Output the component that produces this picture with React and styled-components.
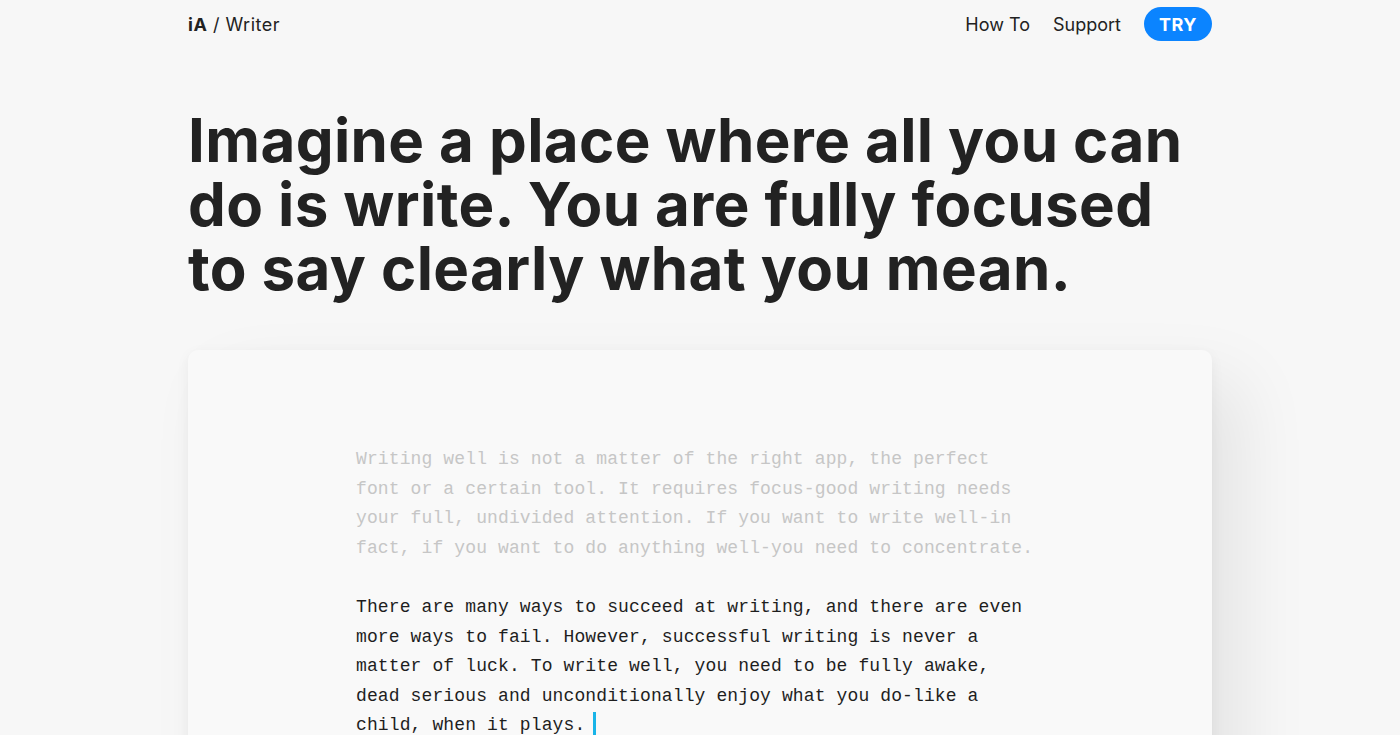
import React from "react";
import styled, { createGlobalStyle } from "styled-components";

const GlobalStyle = createGlobalStyle`
  html, body {
    margin: 0;
    padding: 0;
    background: #f7f7f7;
    overflow: hidden;
  }
  * { box-sizing: border-box; }
`;

const Page = styled.div`
  width: 1400px;
  height: 735px;
  overflow: hidden;
  background: #f7f7f7;
  font-family: "Inter", "Noto Sans", sans-serif;
  color: #222;
`;

const Wrap = styled.div`
  width: 1024px;
  margin: 0 auto;
`;

const Nav = styled.nav`
  height: 48px;
  display: flex;
  align-items: center;
  justify-content: space-between;
`;

const Logo = styled.a`
  font-size: 18px;
  color: #222;
  text-decoration: none;
  letter-spacing: 0.5px;
  b { font-weight: 700; }
`;

const Menu = styled.div`
  display: flex;
  align-items: center;
  gap: 23px;
`;

const MenuLink = styled.a`
  font-size: 18px;
  color: #222;
  text-decoration: none;
`;

const TryButton = styled.a`
  display: inline-flex;
  align-items: center;
  justify-content: center;
  width: 68px;
  height: 34px;
  border-radius: 17px;
  background: #0b84ff;
  color: #fff;
  font-weight: 700;
  font-size: 18px;
  letter-spacing: 0.5px;
  text-decoration: none;
`;

const Headline = styled.h1`
  margin: 60px 0 0;
  font-size: 60px;
  line-height: 64px;
  font-weight: 700;
  letter-spacing: 0.4px;
  color: #222;
`;

const Card = styled.div`
  margin-top: 50px;
  height: 500px;
  background: #f9f9f9;
  border-radius: 10px;
  box-shadow: 0 4px 14px rgba(0, 0, 0, 0.05), 30px 30px 70px rgba(0, 0, 0, 0.08);
  padding: 95px 0 0 168px;
`;

const Para = styled.p`
  margin: 0 0 30px;
  width: 700px;
  font-family: "Liberation Mono", "DejaVu Sans Mono", monospace;
  font-size: 18px;
  line-height: 29.5px;
  letter-spacing: 0.12px;
  color: ${({ $faded }) => ($faded ? "#c6c6c6" : "#1e1e1e")};
`;

const Cursor = styled.span`
  display: inline-block;
  width: 3px;
  height: 26px;
  margin-left: 8px;
  vertical-align: -8px;
  background: #19b4e8;
`;

export default function App() {
  return (
    <Page>
      <GlobalStyle />
      <Wrap>
        <Nav>
          <Logo href="#"><b>iA</b> / Writer</Logo>
          <Menu>
            <MenuLink href="#">How To</MenuLink>
            <MenuLink href="#">Support</MenuLink>
            <TryButton href="#">TRY</TryButton>
          </Menu>
        </Nav>
        <Headline>
          Imagine a place where all you can
          <br />
          do is write. You are fully focused
          <br />
          to say clearly what you mean.
        </Headline>
        <Card>
          <Para $faded>
            Writing well is not a matter of the right app, the perfect
            <br />
            font or a certain tool. It requires focus-good writing needs
            <br />
            your full, undivided attention. If you want to write well-in
            <br />
            fact, if you want to do anything well-you need to concentrate.
          </Para>
          <Para>
            There are many ways to succeed at writing, and there are even
            <br />
            more ways to fail. However, successful writing is never a
            <br />
            matter of luck. To write well, you need to be fully awake,
            <br />
            dead serious and unconditionally enjoy what you do-like a
            <br />
            child, when it plays.<Cursor />
          </Para>
        </Card>
      </Wrap>
    </Page>
  );
}
